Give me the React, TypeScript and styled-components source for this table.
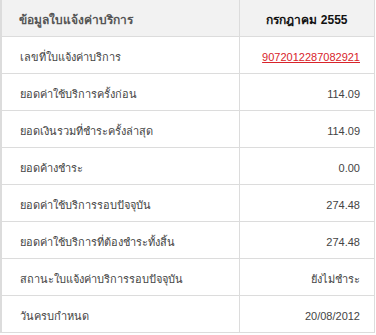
import styled, { createGlobalStyle } from 'styled-components';

const GlobalStyle = createGlobalStyle`
  html, body {
    margin: 0;
    padding: 0;
    background: #ffffff;
  }
  body {
    font-family: Tahoma, "Liberation Sans", "DejaVu Sans", sans-serif;
  }
`;

interface Row {
  label: string;
  value: string;
  link?: boolean;
}

const rows: Row[] = [
  { label: 'เลขที่ใบแจ้งค่าบริการ', value: '9072012287082921', link: true },
  { label: 'ยอดค่าใช้บริการครั้งก่อน', value: '114.09' },
  { label: 'ยอดเงินรวมที่ชำระครั้งล่าสุด', value: '114.09' },
  { label: 'ยอดค้างชำระ', value: '0.00' },
  { label: 'ยอดค่าใช้บริการรอบปัจจุบัน', value: '274.48' },
  { label: 'ยอดค่าใช้บริการที่ต้องชำระทั้งสิ้น', value: '274.48' },
  { label: 'สถานะใบแจ้งค่าบริการรอบปัจจุบัน', value: 'ยังไม่ชำระ' },
  { label: 'วันครบกำหนด', value: '20/08/2012' },
];

export default function App() {
  return (
    <>
      <GlobalStyle />
      <BillTable>
        <thead>
          <tr>
            <HeadCell>ข้อมูลใบแจ้งค่าบริการ</HeadCell>
            <HeadCell $center>กรกฎาคม 2555</HeadCell>
          </tr>
        </thead>
        <tbody>
          {rows.map((row) => (
            <tr key={row.label}>
              <LabelCell>{row.label}</LabelCell>
              <ValueCell>
                {row.link ? <BillLink href="#">{row.value}</BillLink> : row.value}
              </ValueCell>
            </tr>
          ))}
        </tbody>
      </BillTable>
    </>
  );
}

const BillTable = styled.table`
  width: 375px;
  border-collapse: collapse;
  border-left: 2px solid #dcdcdc;
  border-right: 1px solid #dcdcdc;
  border-bottom: 1px solid #dcdcdc;
  font-size: 11px;
  color: #333333;
`;

const HeadCell = styled.th<{ $center?: boolean }>`
  height: 34px;
  padding: 2px 0 0 17px;
  background-color: #f2f2f2;
  border-bottom: 1px solid #dcdcdc;
  border-left: 1px solid #dcdcdc;
  text-align: ${({ $center }) => ($center ? 'center' : 'left')};
  color: ${({ $center }) => ($center ? '#111111' : '#555555')};
  font-weight: bold;
  font-size: 12px;

  &:first-child {
    width: 220px;
    border-left: none;
  }

  &:last-child {
    padding: 2px 0 0 0;
  }
`;

const LabelCell = styled.td`
  height: 33px;
  padding: 3px 0 0 18px;
  border-bottom: 1px solid #dcdcdc;
  color: #444444;
`;

const ValueCell = styled.td`
  height: 33px;
  padding: 3px 14px 0 0;
  border-bottom: 1px solid #dcdcdc;
  border-left: 1px solid #dcdcdc;
  text-align: right;
  color: #444444;
`;

const BillLink = styled.a`
  color: #d8232a;
  text-decoration: underline;
`;
